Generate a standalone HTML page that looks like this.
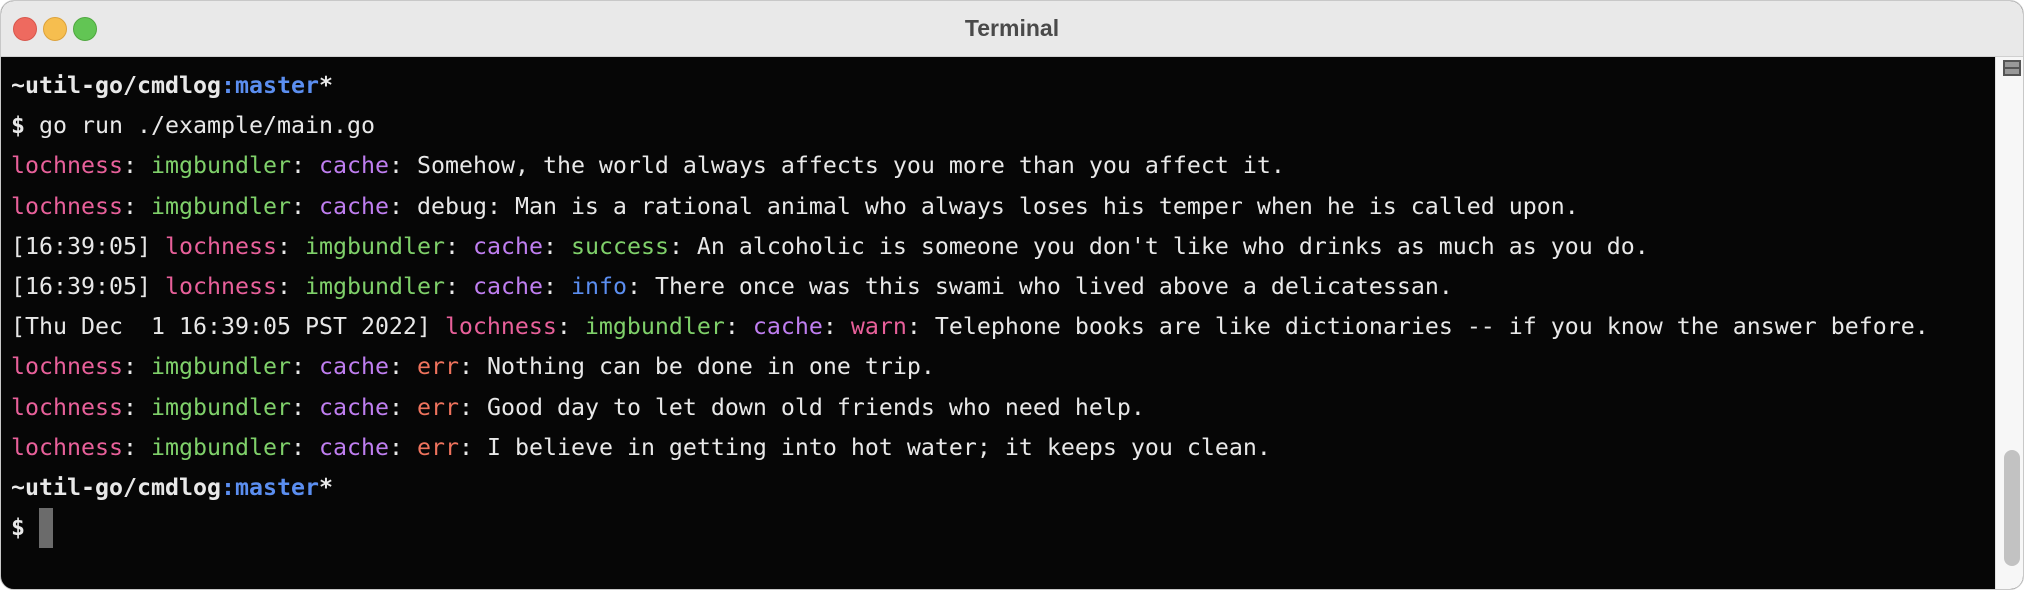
<!DOCTYPE html>
<html><head><meta charset="utf-8"><style>
html,body{margin:0;padding:0;background:#fff;}
.win{position:absolute;left:0;top:0;width:2022px;height:588px;border:1px solid #c8c8c8;border-radius:14px;overflow:hidden;background:#060606;}
.title{position:absolute;left:0;top:0;width:100%;height:55px;background:#e9e9e9;border-bottom:1px solid #d0d0d0;}
.title .t{position:absolute;left:0;right:0;top:13px;height:28px;line-height:28px;text-align:center;font-family:"Liberation Sans",sans-serif;font-weight:bold;font-size:23px;color:#4a4a4a;}
.dot{position:absolute;top:16px;width:24px;height:24px;border-radius:50%;}
.sb{position:absolute;left:1994px;top:56px;width:30px;height:534px;background:#f7f7f7;border-left:1px solid #e0e0e0;}
.sb .btn{position:absolute;left:7px;top:3px;width:18px;height:16px;border:2px solid #555;background:#999;box-sizing:border-box;}
.sb .btn:after{content:"";position:absolute;left:0;right:0;top:5px;height:2px;background:#555;}
.sb .thumb{position:absolute;left:8px;top:393px;width:16px;height:116px;border-radius:8px;background:#c2c2c2;}
.term{position:absolute;left:10px;top:65px;font-family:"DejaVu Sans Mono","Liberation Mono",monospace;font-size:23.25px;line-height:40.2px;color:#e8e8e8;white-space:pre;}
b{font-weight:bold;}
.p{color:#e8609a}.g{color:#7fd06a}.v{color:#bf7ef0}.bl{color:#5b8ef0}.r{color:#ef735d}
.cur{display:inline-block;width:14px;height:40px;background:#6b6b6b;vertical-align:top;}
</style></head><body>
<div class="win">
<div class="title"><div class="dot" style="left:12px;background:#ee6a5f;border:1px solid #d8574c;box-sizing:border-box"></div><div class="dot" style="left:42px;background:#f6be4f;border:1px solid #dda23a;box-sizing:border-box"></div><div class="dot" style="left:72px;background:#62c554;border:1px solid #4fa83f;box-sizing:border-box"></div><div class="t">Terminal</div></div>
<div class="term"><b>~util-go/cmdlog<span class="bl">:master</span>*</b>
<b>$</b> go run ./example/main.go
<span class="p">lochness</span>: <span class="g">imgbundler</span>: <span class="v">cache</span>: Somehow, the world always affects you more than you affect it.
<span class="p">lochness</span>: <span class="g">imgbundler</span>: <span class="v">cache</span>: debug: Man is a rational animal who always loses his temper when he is called upon.
[16:39:05] <span class="p">lochness</span>: <span class="g">imgbundler</span>: <span class="v">cache</span>: <span class="g">success</span>: An alcoholic is someone you don't like who drinks as much as you do.
[16:39:05] <span class="p">lochness</span>: <span class="g">imgbundler</span>: <span class="v">cache</span>: <span class="bl">info</span>: There once was this swami who lived above a delicatessan.
[Thu Dec  1 16:39:05 PST 2022] <span class="p">lochness</span>: <span class="g">imgbundler</span>: <span class="v">cache</span>: <span class="p">warn</span>: Telephone books are like dictionaries -- if you know the answer before.
<span class="p">lochness</span>: <span class="g">imgbundler</span>: <span class="v">cache</span>: <span class="r">err</span>: Nothing can be done in one trip.
<span class="p">lochness</span>: <span class="g">imgbundler</span>: <span class="v">cache</span>: <span class="r">err</span>: Good day to let down old friends who need help.
<span class="p">lochness</span>: <span class="g">imgbundler</span>: <span class="v">cache</span>: <span class="r">err</span>: I believe in getting into hot water; it keeps you clean.
<b>~util-go/cmdlog<span class="bl">:master</span>*</b>
<b>$</b> <span class="cur"></span></div>
<div class="sb"><div class="btn"></div><div class="thumb"></div></div>
</div>
</body></html>
